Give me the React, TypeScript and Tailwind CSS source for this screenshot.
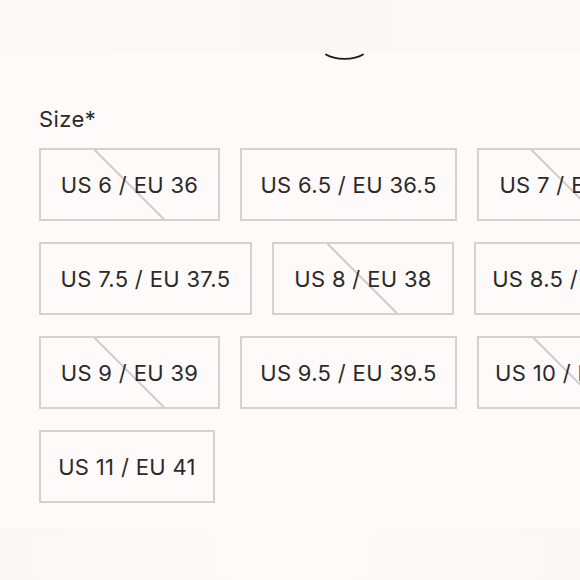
const sizes = [
  { label: "US 6 / EU 36", soldOut: true, width: "w-[181px]" },
  { label: "US 6.5 / EU 36.5", soldOut: false, width: "w-[217px]" },
  { label: "US 7 / EU 37", soldOut: true, width: "w-[180px]" },
  { label: "US 7.5 / EU 37.5", soldOut: false, width: "w-[213px]" },
  { label: "US 8 / EU 38", soldOut: true, width: "w-[182px]" },
  { label: "US 8.5 / EU 38.5", soldOut: false, width: "w-[213px]" },
  { label: "US 9 / EU 39", soldOut: true, width: "w-[181px]" },
  { label: "US 9.5 / EU 39.5", soldOut: false, width: "w-[217px]" },
  { label: "US 10 / EU 40", soldOut: true, width: "w-[184px]" },
  { label: "US 11 / EU 41", soldOut: false, width: "w-[176px]" },
];

function SizeOption({ label, soldOut, width }: { label: string; soldOut: boolean; width: string }) {
  return (
    <button
      type="button"
      className={`relative flex h-[73px] shrink-0 items-center justify-center overflow-hidden border-2 border-[#d6d1cd] text-[22px] leading-none tracking-[0.015em] whitespace-nowrap text-[#2a2a2a] ${width}`}
    >
      {soldOut && (
        <span className="absolute left-1/2 top-1/2 h-[1.5px] w-[104px] -translate-x-1/2 -translate-y-1/2 rotate-45 bg-[#d0cbc7]" />
      )}
      <span className="relative">{label}</span>
    </button>
  );
}

export default function App() {
  return (
    <div className="h-[580px] w-[580px] overflow-hidden bg-[#fdfaf9] font-['Inter',sans-serif]">
      <div className="h-[53px] bg-gradient-to-r from-[#fcf9f8] via-[#faf7f6] to-[#fbf8f7]" />
      <svg className="ml-[325px] block" width="39" height="8" viewBox="0 0 39 8" fill="none">
        <path d="M1 1.5 C 10 7.2, 29 7.2, 38 1.5" stroke="#1c1c1c" strokeWidth="1.8" strokeLinecap="round" />
      </svg>
      <div className="pl-[39px] pt-[44px]">
        <p className="text-[22px] leading-[28px] tracking-[0.02em] text-[#2a2a2a]">Size*</p>
        <div className="mt-[15px] flex w-[700px] flex-wrap gap-x-[20px] gap-y-[21px]">
          {sizes.map((s) => (
            <SizeOption key={s.label} label={s.label} soldOut={s.soldOut} width={s.width} />
          ))}
        </div>
      </div>
      <div className="mt-[26px] h-[60px] bg-gradient-to-r from-[#faf7f6] via-[#fdfaf9] to-[#faf7f6]" />
    </div>
  );
}
